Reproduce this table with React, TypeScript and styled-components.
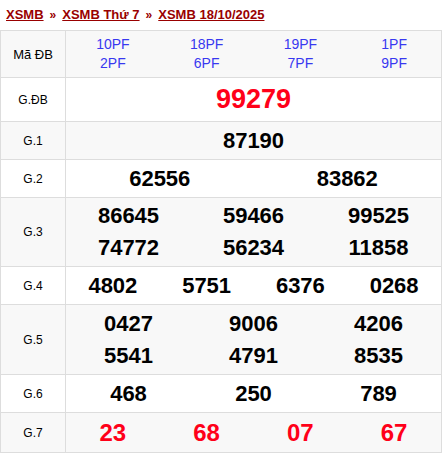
import React from "react";
import styled, { createGlobalStyle } from "styled-components";

const Global = createGlobalStyle`
  *, *::before, *::after { box-sizing: border-box; }
  html, body { margin: 0; padding: 0; background: #fff; }
  body { font-family: Arial, "Liberation Sans", Helvetica, sans-serif; color: #000; }
`;

const Wrap = styled.div`
  width: 442px;
`;

const Crumbs = styled.div`
  height: 30px;
  display: flex;
  align-items: center;
  padding-left: 6px;
  padding-bottom: 1px;
  font-size: 13px;
  font-weight: bold;
  color: #990000;
  gap: 6px;
`;

const CrumbLink = styled.a`
  color: #990000;
  text-decoration: underline;
`;

const Sep = styled.span`
  color: #990000;
  font-size: 12px;
`;

const Table = styled.div`
  border: 1px solid #dddddd;
  border-bottom: none;
`;

const Row = styled.div<{ $h: number; $alt: boolean }>`
  display: grid;
  grid-template-columns: 65px 1fr;
  height: ${(p) => p.$h}px;
  border-bottom: 1px solid #dddddd;
  background: ${(p) => (p.$alt ? "#f8f8f8" : "#ffffff")};
`;

const Label = styled.div<{ $size?: number }>`
  border-right: 1px solid #dddddd;
  display: flex;
  align-items: center;
  justify-content: center;
  font-size: ${(p) => p.$size ?? 12}px;
  color: #000;
`;

const Cells = styled.div<{ $cols: number }>`
  display: grid;
  grid-template-columns: repeat(${(p) => p.$cols}, 1fr);
  align-items: center;
`;

const Cell = styled.div<{ $gap: number }>`
  display: flex;
  flex-direction: column;
  align-items: center;
  justify-content: center;
  gap: ${(p) => p.$gap}px;
`;

const Code = styled.span`
  color: #3838f0;
  font-size: 14px;
  line-height: 19px;
`;

const Num = styled.span<{ $size: number; $red?: boolean }>`
  font-weight: bold;
  font-size: ${(p) => p.$size}px;
  line-height: ${(p) => p.$size + 4}px;
  color: ${(p) => (p.$red ? "#ff0019" : "#000")};
`;

type Prize = {
  label: string;
  h: number;
  cols: number;
  nums: string[];
  size: number;
  red?: boolean;
};

const codes = [
  ["10PF", "2PF"],
  ["18PF", "6PF"],
  ["19PF", "7PF"],
  ["1PF", "9PF"],
];

const prizes: Prize[] = [
  { label: "G.ĐB", h: 44, cols: 1, nums: ["99279"], size: 27, red: true },
  { label: "G.1", h: 38, cols: 1, nums: ["87190"], size: 22 },
  { label: "G.2", h: 38, cols: 2, nums: ["62556", "83862"], size: 22 },
  { label: "G.3", h: 69, cols: 3, nums: ["86645", "59466", "99525", "74772", "56234", "11858"], size: 22 },
  { label: "G.4", h: 38, cols: 4, nums: ["4802", "5751", "6376", "0268"], size: 22 },
  { label: "G.5", h: 70, cols: 3, nums: ["0427", "9006", "4206", "5541", "4791", "8535"], size: 22 },
  { label: "G.6", h: 38, cols: 3, nums: ["468", "250", "789"], size: 22 },
  { label: "G.7", h: 40, cols: 4, nums: ["23", "68", "07", "67"], size: 24, red: true },
];

function columnsOf(p: Prize): string[][] {
  const rows = p.nums.length / p.cols;
  const out: string[][] = [];
  for (let c = 0; c < p.cols; c++) {
    const col: string[] = [];
    for (let r = 0; r < rows; r++) col.push(p.nums[r * p.cols + c]);
    out.push(col);
  }
  return out;
}

export default function App() {
  return (
    <Wrap>
      <Global />
      <Crumbs>
        <CrumbLink href="#">XSMB</CrumbLink>
        <Sep>»</Sep>
        <CrumbLink href="#">XSMB Thứ 7</CrumbLink>
        <Sep>»</Sep>
        <CrumbLink href="#">XSMB 18/10/2025</CrumbLink>
      </Crumbs>
      <Table>
        <Row $h={47} $alt>
          <Label $size={13}>Mã ĐB</Label>
          <Cells $cols={4}>
            {codes.map((c, i) => (
              <Cell key={i} $gap={0}>
                {c.map((t) => (
                  <Code key={t}>{t}</Code>
                ))}
              </Cell>
            ))}
          </Cells>
        </Row>
        {prizes.map((p, i) => (
          <Row key={p.label} $h={p.h} $alt={i % 2 === 1}>
            <Label>{p.label}</Label>
            <Cells $cols={p.cols}>
              {columnsOf(p).map((col, j) => (
                <Cell key={j} $gap={6}>
                  {col.map((n) => (
                    <Num key={n} $size={p.size} $red={p.red}>
                      {n}
                    </Num>
                  ))}
                </Cell>
              ))}
            </Cells>
          </Row>
        ))}
      </Table>
    </Wrap>
  );
}
